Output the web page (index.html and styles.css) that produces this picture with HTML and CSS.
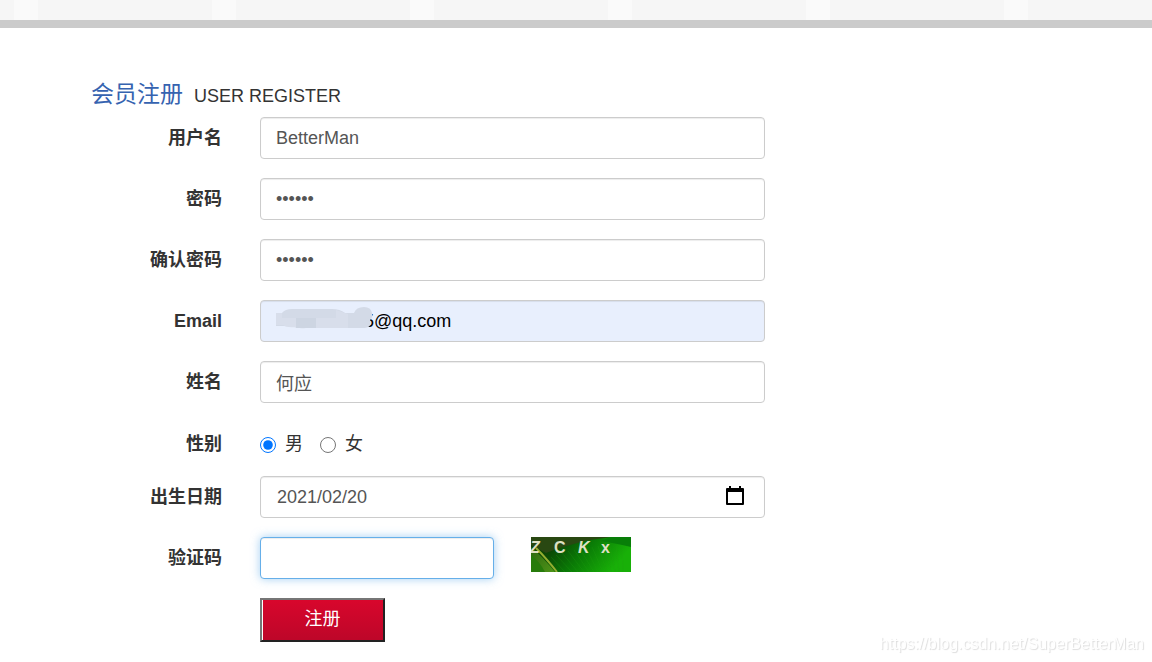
FILE: index.html
```html
<!DOCTYPE html>
<html lang="zh-CN">
<head>
<meta charset="utf-8">
<meta name="viewport" content="width=device-width, initial-scale=1">
<title>会员注册</title>
<link rel="stylesheet" href="styles.css">
</head>
<body>
<div class="banner"></div>
<main class="page">
  <h1 class="title"><span class="title-main">会员注册</span><span class="title-sub">USER REGISTER</span></h1>
  <form class="form">
    <div class="row">
      <label class="label" for="username">用户名</label>
      <input class="control" id="username" type="text" value="BetterMan">
    </div>
    <div class="row">
      <label class="label" for="password">密码</label>
      <input class="control" id="password" type="password" value="123456">
    </div>
    <div class="row">
      <label class="label" for="confirm">确认密码</label>
      <input class="control" id="confirm" type="password" value="123456">
    </div>
    <div class="row">
      <label class="label" for="email">Email</label>
      <div class="field">
        <input class="control control-filled" id="email" type="text" value="5@qq.com">
        <svg class="mask" width="98" height="24" viewBox="0 0 98 24" aria-hidden="true">
          <path d="M0 6h6Q9 2 16 2h40q8 0 13 4h9Q80 0 88 0q7 0 8 6 1 5-2 7 2 7-5 8H30q-8 1-15-2H0z" fill="#d3dae7"/>
          <path d="M0 6h6v5h14v9Q10 21 7 18H0zM40 11h20V3l12 4v14H40z" fill="#d8deeb"/>
          <path d="M20 11h20v10H20z" fill="#cdd5e2"/>
        </svg>
      </div>
    </div>
    <div class="row">
      <label class="label" for="realname">姓名</label>
      <input class="control" id="realname" type="text" value="何应">
    </div>
    <div class="row row-radio" role="radiogroup" aria-labelledby="gender">
      <span class="label" id="gender">性别</span>
      <div class="radios">
        <label class="radio"><input class="radio-input" type="radio" name="sex" checked>男</label>
        <label class="radio"><input class="radio-input" type="radio" name="sex">女</label>
      </div>
    </div>
    <div class="row">
      <label class="label" for="birthday">出生日期</label>
      <div class="field">
        <input class="control control-date" id="birthday" type="text" value="2021/02/20">
        <button class="calendar" type="button" aria-label="选择日期">
          <svg width="18" height="20" viewBox="0 0 18 20"><path fill="#000" fill-rule="evenodd" d="M3 0h2v2h8V0h2v2h2q1 0 1 1v15q0 1-1 1H1q-1 0-1-1V3q0-1 1-1h2zM2 6v11h14V6z"/></svg>
        </button>
      </div>
    </div>
    <div class="row">
      <label class="label" for="code">验证码</label>
      <div class="captcha">
        <input class="control control-focus" id="code" type="text">
        <svg class="captcha-image" width="100" height="35" viewBox="0 0 100 35" role="img" aria-label="ZCKX">
          <defs>
            <linearGradient id="leaf" x1="0" y1="0" x2="1" y2="0.3">
              <stop offset="0" stop-color="#123d08"/><stop offset=".3" stop-color="#0b4a05"/><stop offset=".6" stop-color="#0a7a06"/><stop offset="1" stop-color="#18b008"/>
            </linearGradient>
            <linearGradient id="stem" x1="0" y1="0" x2="1" y2="1">
              <stop offset="0" stop-color="#2d6710"/><stop offset="1" stop-color="#4f9518"/>
            </linearGradient>
          </defs>
          <path fill="url(#leaf)" d="M0 0h100v35H0z"/>
          <path fill="#294812" d="M0 0h80Q45 4 15 16L0 8z"/>
          <path fill="#087e08" d="M80 0h20v10Q88 7 70 4z"/>
          <path fill="url(#stem)" d="M0 10q12 10 24 25H0z"/>
          <path fill="#277b0b" d="M0 18q9 7 14 17H0z"/>
          <path fill="none" stroke="#93ad30" stroke-width="2" d="M5 11q10 10 21 24"/>
          <path fill="none" stroke="#25a012" stroke-opacity=".25" d="M20 20l14 15M25 18l16 17M31 16l16 19M37 14l16 21M43 13l15 22M49 12l14 23M55 11l12 24M61 10l11 25M67 9l9 26M73 9l7 26M79 9l5 26M85 9l3 26M91 10l1 25"/>
          <g class="captcha-text">
            <text x="-1" y="16" font-style="italic">Z</text>
            <text x="23" y="16">C</text>
            <text x="47" y="16" font-style="italic">K</text>
            <text x="70" y="16">x</text>
          </g>
        </svg>
      </div>
    </div>
    <div class="row">
      <button class="submit" type="button">注册</button>
    </div>
  </form>
</main>
<div class="watermark">https://blog.csdn.net/SuperBetterMan</div>
</body>
</html>
```
FILE: styles.css
```css
* { box-sizing: border-box; }

body {
  margin: 0;
  background: #fff;
  color: #333;
  font-family: "Liberation Sans", "Noto Sans CJK SC", sans-serif;
  font-size: 18px;
  line-height: 24px;
}

.banner {
  height: 28px;
  border-bottom: 8px solid #cbcbcb;
  background: repeating-linear-gradient(90deg, #f6f6f6 0 14px, #fafafa 14px 38px, #f6f6f6 38px 198px);
}

.page { padding: 50px 24px 0 91px; }

.title {
  display: flex;
  align-items: baseline;
  gap: 11px;
  margin: 0 0 5px;
  font-weight: 400;
  line-height: 32px;
}

.title-main {
  color: #3663b0;
  font-size: 23px;
}

.title-sub { font-size: 18px; }

.form {
  display: flex;
  flex-direction: column;
  gap: 19px;
}

.row {
  display: grid;
  grid-template-columns: 131px minmax(0, 505px);
  column-gap: 38px;
  align-items: center;
}

.label {
  font-weight: 700;
  text-align: right;
}

.control {
  display: block;
  width: 100%;
  height: 42px;
  padding: 0 15px;
  border: 1px solid #ccc;
  border-radius: 4px;
  outline: 0;
  background: #fff;
  box-shadow: inset 0 1px 1px rgba(0, 0, 0, .075);
  color: #555;
  font: inherit;
}

.control-filled {
  padding-left: 103px;
  background: #e8effd;
  color: #000;
}

.control-date { padding-left: 16px; }

.control-focus {
  border-color: #66afe9;
  box-shadow: inset 0 1px 1px rgba(0, 0, 0, .075), 0 0 10px rgba(102, 175, 233, .6);
}

.field { position: relative; }

.mask {
  position: absolute;
  top: 7px;
  left: 16px;
}

.calendar {
  position: absolute;
  top: 10px;
  right: 21px;
  height: 20px;
  padding: 0;
  border: 0;
  background: none;
}

.calendar svg { display: block; }

.row-radio { padding: 10px 0 1px; }

.radios {
  display: flex;
  gap: 17px;
}

.radio {
  display: flex;
  align-items: center;
  gap: 9px;
}

.radio-input {
  width: 16px;
  height: 16px;
  margin: 1px 0 0;
  accent-color: #0075ff;
}

.captcha {
  display: grid;
  grid-template-columns: 234px 100px;
  gap: 37px;
}

.captcha-image { display: block; }

.captcha-text {
  fill: #dfe0c4;
  font-size: 16px;
  font-weight: 700;
}

.submit {
  grid-column: 2;
  width: 125px;
  height: 44px;
  padding: 0 0 2px;
  border: 2px solid;
  border-color: #767676 #222 #222 #767676;
  background: linear-gradient(#d8062c, #bd0629);
  box-shadow: inset 1px 0 #fff;
  color: #fff;
  font: inherit;
}

.watermark {
  position: fixed;
  right: 8px;
  bottom: 6px;
  color: #fff;
  font-size: 16px;
  text-shadow: 1px 1px 1px #ddd;
}
```
